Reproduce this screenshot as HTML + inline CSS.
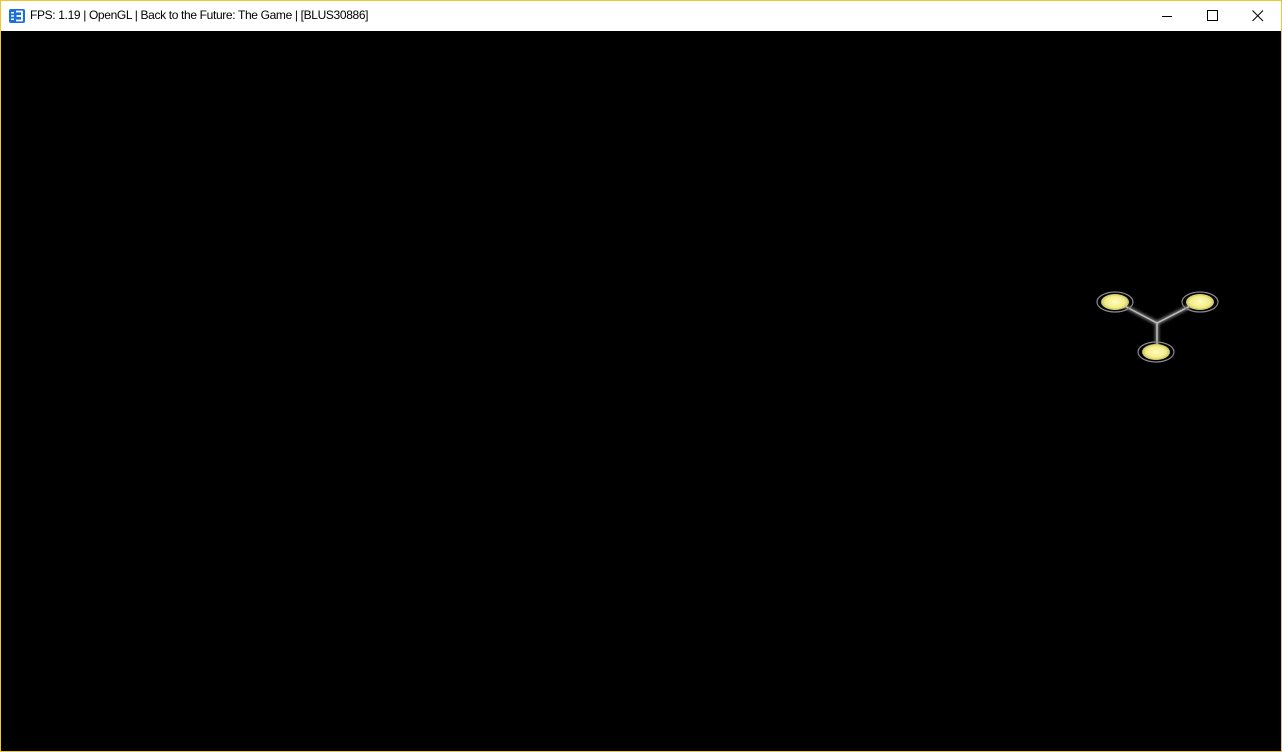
<!DOCTYPE html>
<html><head><meta charset="utf-8"><style>
html,body{margin:0;padding:0;width:1282px;height:752px;overflow:hidden;background:#f0c828}
#win{position:absolute;left:1px;top:1px;width:1280px;height:750px;background:#000}
#tb{position:absolute;left:0;top:0;width:1280px;height:30px;background:#fff}
#title{position:absolute;left:29px;top:7px;font:12px "Liberation Sans",sans-serif;letter-spacing:-0.35px;color:#000;white-space:nowrap}
svg{position:absolute}
</style></head><body>
<div id="win">
<div id="tb">
<svg style="left:8px;top:8px" width="16" height="14" viewBox="0 0 16 14">
<rect x="0" y="0" width="16" height="14" rx="2" fill="#1a6fd8"/>
<rect x="2" y="3" width="3" height="1.5" fill="#fff"/><rect x="2" y="6.2" width="3" height="1.5" fill="#fff"/><rect x="2" y="9.5" width="3" height="1.5" fill="#fff"/>
<path d="M7 2.5h6v9H7" fill="none" stroke="#fff" stroke-width="1.8"/><path d="M7.5 7h5" stroke="#fff" stroke-width="1.8"/>
</svg>
<div id="title">FPS: 1.19 | OpenGL | Back to the Future: The Game | [BLUS30886]</div>
<svg style="left:1160px;top:10px" width="12" height="10"><path d="M1 5.5h10" stroke="#000" stroke-width="1"/></svg>
<svg style="left:1206px;top:9px" width="12" height="12"><rect x="0.5" y="0.5" width="10" height="10" fill="none" stroke="#000"/></svg>
<svg style="left:1251px;top:9px" width="12" height="12"><path d="M0.5 0.5L11 11M11 0.5L0.5 11" stroke="#000" stroke-width="1"/></svg>
</div>
<svg style="left:0;top:0" width="1280" height="750">
<defs><radialGradient id="g"><stop offset="0" stop-color="#fffcc0"/><stop offset="0.7" stop-color="#f2ee88"/><stop offset="1" stop-color="#c8c060"/></radialGradient>
<filter id="b"><feGaussianBlur stdDeviation="1.5"/></filter></defs>
<g stroke="#9a9a9a" stroke-width="3" fill="none" filter="url(#b)">
<path d="M1114 300L1156 322L1199 300M1156 322L1156 350"/></g>
<g stroke="#bbb" stroke-width="1.5" fill="none">
<path d="M1114 300L1156 322L1199 300M1156 322L1156 350"/></g>
<g>
<ellipse cx="1114" cy="301" rx="18" ry="10" fill="none" stroke="#888" stroke-width="1.2"/>
<ellipse cx="1114" cy="301" rx="14" ry="8" fill="url(#g)"/>
<ellipse cx="1199" cy="301" rx="18" ry="10" fill="none" stroke="#888" stroke-width="1.2"/>
<ellipse cx="1199" cy="301" rx="14" ry="8" fill="url(#g)"/>
<ellipse cx="1155" cy="351" rx="18" ry="10" fill="none" stroke="#888" stroke-width="1.2"/>
<ellipse cx="1155" cy="351" rx="14" ry="8" fill="url(#g)"/>
</g>
</svg>
</div>
</body></html>
